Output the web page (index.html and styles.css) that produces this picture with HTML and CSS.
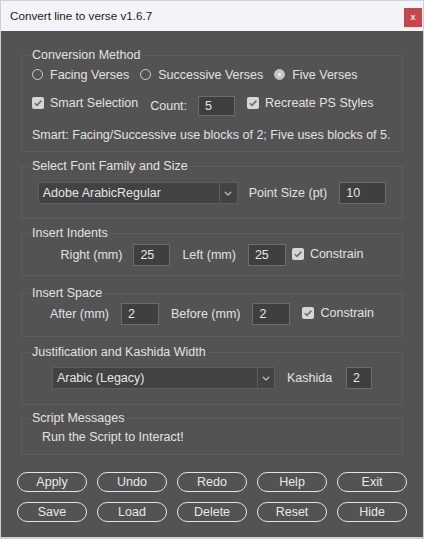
FILE: index.html
```html
<!DOCTYPE html>
<html>
<head>
<meta charset="utf-8">
<link rel="stylesheet" href="styles.css">
</head>
<body>
<div class="window">
  <div class="titlebar">
    <span class="title">Convert line to verse v1.6.7</span>
    <span class="close">x</span>
  </div>
  <div class="content">
    <fieldset class="panel p1">
      <legend>Conversion Method</legend>
      <div class="row radios">
        <label class="opt"><span class="radio"></span>Facing Verses</label>
        <label class="opt"><span class="radio"></span>Successive Verses</label>
        <label class="opt"><span class="radio on"></span>Five Verses</label>
      </div>
      <div class="row checks">
        <label class="opt chk"><span class="checkbox"><svg viewBox="0 0 12 12" width="12" height="12"><polyline points="2.8,6.2 5,8.4 9.4,3.6" fill="none" stroke="#6f6f6f" stroke-width="1.6"/></svg></span>Smart Selection</label>
        <span class="lbl tall">Count:</span>
        <span class="field count">5</span>
        <label class="opt chk"><span class="checkbox"><svg viewBox="0 0 12 12" width="12" height="12"><polyline points="2.8,6.2 5,8.4 9.4,3.6" fill="none" stroke="#6f6f6f" stroke-width="1.6"/></svg></span>Recreate PS Styles</label>
      </div>
      <div class="note">Smart: Facing/Successive use blocks of 2; Five uses blocks of 5.</div>
    </fieldset>

    <fieldset class="panel p2">
      <legend>Select Font Family and Size</legend>
      <div class="row centered">
        <span class="dropdown font-dd"><span class="dd-text">Adobe ArabicRegular</span><span class="dd-arrow"><svg viewBox="0 0 8 5" width="8" height="5"><polyline points="0.8,0.8 4,4 7.2,0.8" fill="none" stroke="#cfcfcf" stroke-width="1.1"/></svg></span></span>
        <span class="lbl gl11">Point Size (pt)</span>
        <span class="field size gl12">10</span>
      </div>
    </fieldset>

    <fieldset class="panel p3">
      <legend>Insert Indents</legend>
      <div class="row centered">
        <span class="lbl">Right (mm)</span>
        <span class="field num gl11">25</span>
        <span class="lbl gl12">Left (mm)</span>
        <span class="field num gl12">25</span>
        <label class="opt chk gl6 up3"><span class="checkbox"><svg viewBox="0 0 12 12" width="12" height="12"><polyline points="2.8,6.2 5,8.4 9.4,3.6" fill="none" stroke="#6f6f6f" stroke-width="1.6"/></svg></span>Constrain</label>
      </div>
    </fieldset>

    <fieldset class="panel p4">
      <legend>Insert Space</legend>
      <div class="row centered">
        <span class="lbl">After (mm)</span>
        <span class="field num gl12">2</span>
        <span class="lbl gl12">Before (mm)</span>
        <span class="field num gl12">2</span>
        <label class="opt chk gl12 up1"><span class="checkbox"><svg viewBox="0 0 12 12" width="12" height="12"><polyline points="2.8,6.2 5,8.4 9.4,3.6" fill="none" stroke="#6f6f6f" stroke-width="1.6"/></svg></span>Constrain</label>
      </div>
    </fieldset>

    <fieldset class="panel p5">
      <legend>Justification and Kashida Width</legend>
      <div class="row centered">
        <span class="dropdown just-dd"><span class="dd-text">Arabic (Legacy)</span><span class="dd-arrow"><svg viewBox="0 0 8 5" width="8" height="5"><polyline points="0.8,0.8 4,4 7.2,0.8" fill="none" stroke="#cfcfcf" stroke-width="1.1"/></svg></span></span>
        <span class="lbl gl12">Kashida</span>
        <span class="field kash gl14">2</span>
      </div>
    </fieldset>

    <fieldset class="panel p6">
      <legend>Script Messages</legend>
      <div class="message">Run the Script to Interact!</div>
    </fieldset>

    <div class="buttons">
      <span class="btn">Apply</span>
      <span class="btn">Undo</span>
      <span class="btn">Redo</span>
      <span class="btn">Help</span>
      <span class="btn">Exit</span>
      <span class="btn">Save</span>
      <span class="btn">Load</span>
      <span class="btn">Delete</span>
      <span class="btn">Reset</span>
      <span class="btn">Hide</span>
    </div>
  </div>
</div>
</body>
</html>
```

FILE: styles.css
```css
* { box-sizing: border-box; }

html, body {
  margin: 0;
  padding: 0;
  background: #535353;
}

.window {
  width: 424px;
  height: 539px;
  border: 1px solid #cdd0d5;
  border-bottom-width: 2px;
  display: flex;
  flex-direction: column;
  background: #535353;
  font-family: "Liberation Sans", Arial, sans-serif;
  font-size: 12.5px;
  color: #e2e2e2;
  overflow: hidden;
}

.titlebar {
  height: 30px;
  flex: none;
  background: #f2f4f8;
  display: flex;
  justify-content: space-between;
  align-items: flex-start;
  padding-left: 9px;
  padding-right: 1px;
}

.title {
  color: #1a1a1a;
  font-size: 11.7px;
  line-height: 16px;
  margin-top: 7px;
}

.close {
  width: 18px;
  height: 19px;
  margin-top: 7px;
  background: #c8464a;
  color: #f4f4f4;
  font-size: 9px;
  font-weight: bold;
  line-height: 18px;
  text-align: center;
}

.content {
  flex: 1;
  padding: 16px 20px 0 20px;
  display: flex;
  flex-direction: column;
}

.panel {
  margin: 0;
  min-width: 0;
  border: 1px solid #5d5d5d;
  padding: 0 10px;
}

.panel legend {
  padding: 0 2px;
  margin-left: -2px;
  line-height: 16px;
  color: #e2e2e2;
}

.p1 { padding-bottom: 8px; }
.p2 { margin-top: 6px; padding-bottom: 14px; }
.p3 { margin-top: 6px; padding-bottom: 9px; }
.p4 { margin-top: 9px; padding-bottom: 11px; }
.p5 { margin-top: 7px; padding-bottom: 15px; }
.p6 { margin-top: 5px; padding-bottom: 9px; }

.row {
  display: flex;
  align-items: center;
  height: 22px;
  white-space: nowrap;
}

.p2 .row { margin-top: 8px; margin-left: -10px; margin-right: -10px; }
.p3 .row { margin-top: 3px; margin-left: -10px; margin-right: -10px; }
.p4 .row { margin-top: 2px; margin-left: -10px; margin-right: -10px; }
.p5 .row { margin-top: 7px; margin-left: -10px; margin-right: -10px; }

.centered { justify-content: center; }

.radios { gap: 11px; padding-top: 1px; }

.checks {
  margin-top: 10px;
  align-items: flex-start;
}
.checks .chk { line-height: 16px; height: 16px; }
.checks .tall { line-height: 22px; margin-left: 12px; }
.checks .count { margin-top: 1px; margin-left: 11px; }
.checks .chk + .lbl + .field + .chk { margin-left: 12px; }

.opt {
  display: flex;
  align-items: center;
  line-height: 16px;
}

.radio {
  width: 11px;
  height: 11px;
  border-radius: 50%;
  border: 1px solid #cfcfcf;
  margin-right: 7px;
  flex: none;
  position: relative;
}
.radio.on {
  background: #c4c4c4;
  border-color: #c4c4c4;
}
.radio.on::after {
  content: "";
  position: absolute;
  left: 3px;
  top: 3px;
  width: 3px;
  height: 3px;
  border-radius: 50%;
  background: #f2f2f2;
}

.checkbox {
  width: 12px;
  height: 12px;
  border-radius: 2px;
  background: #d6d6d6;
  margin-right: 6px;
  flex: none;
  display: block;
}
.checkbox svg { display: block; }

.lbl { line-height: 16px; }

.field {
  height: 22px;
  background: #3f3f3f;
  border: 1px solid #6c6c6c;
  padding-left: 6px;
  line-height: 20px;
  color: #e6e6e6;
}
.count { width: 37px; height: 20px; line-height: 18px; }
.size { width: 47px; }
.num { width: 37px; }
.p4 .num, .p3 .num + .lbl + .num { width: 38px; }
.kash { width: 26px; }

.dropdown {
  display: flex;
  height: 22px;
  background: #424242;
  border: 1px solid #5e5e5e;
}
.font-dd { width: 200px; }
.just-dd { width: 223px; }
.dd-text {
  flex: 1;
  padding-left: 4px;
  line-height: 20px;
  color: #e6e6e6;
}
.dd-arrow {
  width: 18px;
  border-left: 1px solid #5e5e5e;
  display: flex;
  align-items: center;
  justify-content: center;
}
.just-dd .dd-arrow { width: 17px; }

.gl6 { margin-left: 6px; }
.gl11 { margin-left: 11px; }
.gl12 { margin-left: 12px; }
.gl14 { margin-left: 14px; }
.up3 { margin-bottom: 3px; }
.up1 { margin-bottom: 2px; }

.note {
  margin-top: 10px;
  line-height: 16px;
  white-space: nowrap;
}

.message {
  margin-top: 3px;
  margin-left: 10px;
  line-height: 16px;
}

.buttons {
  margin: 17px -4px 0 -4px;
  display: grid;
  grid-template-columns: repeat(5, 70px);
  column-gap: 10px;
  row-gap: 10px;
}

.btn {
  height: 20px;
  border: 1px solid #e4e4e4;
  border-radius: 10px;
  text-align: center;
  line-height: 18px;
  color: #e8e8e8;
}
```
